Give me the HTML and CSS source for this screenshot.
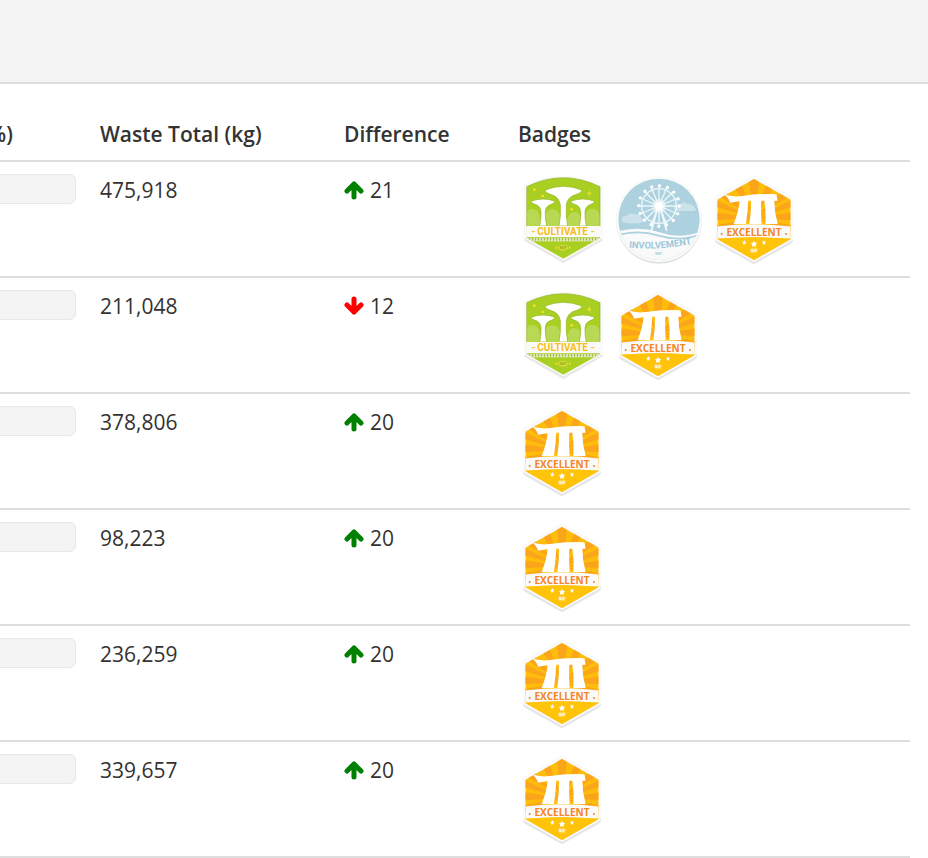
FILE: index.html
```
<!DOCTYPE html>
<html lang="en">
<head>
<meta charset="utf-8">
<title>Waste totals</title>
<link rel="stylesheet" href="styles.css">
</head>
<body>
<svg class="sprite" aria-hidden="true">
  <defs>
    <clipPath id="shield"><path d="M35 56Q145 2 255 56V210L145 272L35 210Z"/></clipPath>
    <clipPath id="disc"><circle cx="144" cy="154" r="122"/></clipPath>
    <clipPath id="hex"><path d="M141 33L251 95V213L141 276L31 213V95Z"/></clipPath>
    <path id="wave" d="M44 238Q95 243 145 241Q200 236 252 226"/>

    <symbol id="arrow" viewBox="0 0 20 20">
      <path d="M10 17V4M3 11L10 4L17 11" fill="none" stroke="currentColor" stroke-width="5" stroke-linecap="round" stroke-linejoin="round"/>
    </symbol>

    <symbol id="cultivate" viewBox="9 18 288 270">
      <path d="M28 57Q28 51 34 49Q145 2 256 49Q262 51 262 57V218L145 286L28 218Z" fill="#e9e9e9"/>
      <path d="M28 56Q28 49 34 47Q145 -2 256 47Q262 49 262 56V210L145 277L28 210Z" fill="#fbfbfb"/>
      <g clip-path="url(#shield)">
        <path d="M30 20H260V280H30Z" fill="#a9cf22"/>
        <g fill="#b9d955">
          <circle cx="52" cy="144" r="21"/><circle cx="112" cy="148" r="24"/><circle cx="178" cy="150" r="18"/><circle cx="232" cy="144" r="22"/>
          <path d="M35 150H255V174H35Z"/>
        </g>
        <g fill="#fff" stroke="#8fb51c" stroke-width="2">
          <path d="M48 100Q84 86 120 100Q119 106 109 109Q91 114 91 132Q90 152 95 174H74Q79 152 78 132Q77 114 60 109Q49 106 48 100Z"/>
          <path d="M167 100Q203 86 239 100Q238 106 228 109Q211 114 210 132Q209 152 214 174H193Q198 152 197 132Q196 114 179 109Q168 106 167 100Z"/>
          <path d="M90 66Q145 44 201 66Q199 75 185 79Q157 86 154 111Q152 143 158 174H132Q138 143 136 111Q133 86 106 79Q91 75 90 66Z"/>
        </g>
        <g fill="#ffdf22">
          <path d="M223 66L225 74L232 76L225 78L223 86L221 78L214 76L221 74Z"/>
          <circle cx="58" cy="65" r="4"/><circle cx="83" cy="84" r="4"/><circle cx="170" cy="124" r="4"/>
        </g>
        <path d="M30 174H260V207H30Z" fill="#fafafa"/>
        <path d="M36 209H254V220H36Z" fill="#f5f8e9"/>
        <path d="M41 214H250" stroke="#a4bc45" stroke-width="8" stroke-dasharray="5 4"/>
        <ellipse cx="144" cy="239" rx="15" ry="9" fill="#d3db31"/>
        <circle cx="124" cy="239" r="3" fill="#ffdf22"/><circle cx="164" cy="239" r="3" fill="#ffdf22"/>
      </g>
      <path d="M35 174V56Q145 2 255 56V174" fill="none" stroke="#91ae28" stroke-width="2"/>
      <text x="144" y="243" class="mark" fill="#91a926">NUP</text>
      <text x="143" y="201" class="name cultivate" fill="#f8bd17">CULTIVATE</text>
      <path d="M50 191H60M228 191H238" stroke="#f8bd17" stroke-width="3"/>
    </symbol>

    <symbol id="involvement" viewBox="9 18 288 270">
      <circle cx="144" cy="158" r="129" fill="#dedede"/>
      <circle cx="144" cy="154" r="129" fill="#f9fafa"/>
      <g clip-path="url(#disc)">
        <path d="M20 30H270V280H20Z" fill="#add1df"/>
        <path d="M34 158Q27 144 47 143Q55 132 70 139Q88 136 91 150Q101 153 94 163Q75 170 34 163ZM189 119Q192 107 206 109Q217 99 229 108Q246 106 251 119Q260 124 249 129H202Q188 128 189 119Z" fill="#cce2eb"/>
        <g stroke="#edf8fa" stroke-width="4" fill="none">
          <circle cx="144" cy="114" r="52"/>
          <path d="M144 52V176M82 114H206M100 70L188 158M100 158L188 70M120 57L168 171M87 90L201 138M87 138L201 90M120 171L168 57"/>
          <path d="M141 114L121 188M147 114L167 188" stroke-width="6"/>
        </g>
        <circle cx="144" cy="114" r="61" fill="none" stroke="#fff" stroke-width="10" stroke-linecap="round" stroke-dasharray="0 23.950"/>
        <circle cx="144" cy="114" r="13" fill="#fff"/><circle cx="144" cy="114" r="21" fill="#fff" opacity=".35"/>
        <path d="M20 190Q83 173 143 192Q207 215 270 190V282H20Z" fill="#fafafa"/>
        <path d="M20 201Q83 184 143 203Q207 222 270 199" stroke="#abd2df" stroke-width="5" fill="none"/>
        <ellipse cx="143" cy="258" rx="14" ry="10" fill="#fff" stroke="#e5eef1" stroke-width="2"/>
      </g>
      <text x="143" y="262" class="mark" fill="#9ec5d3">NUP</text>
      <text class="name involvement" fill="#9cc8da"><textPath href="#wave" startOffset="50%">INVOLVEMENT</textPath></text>
    </symbol>

    <symbol id="excellent" viewBox="9 18 288 270">
      <path d="M133 32Q141 27 149 32L252 90Q258 93 258 100V217Q258 223 252 227L141 289L30 227Q24 223 24 217V100Q24 93 30 90Z" fill="#e6e6e6"/>
      <path d="M133 25Q141 20 149 25L252 83Q258 86 258 93V209Q258 216 252 219L141 282L30 219Q24 216 24 209V93Q24 86 30 83Z" fill="#fafafa"/>
      <g clip-path="url(#hex)">
        <path d="M25 25H256V285H25Z" fill="#ffbd0b"/>
        <path d="M141 150L123 20H159ZM141 150L64 30L91 15ZM141 150L20 75L33 48ZM141 150L20 115V92ZM141 150L20 157V132ZM141 150L191 15L218 30ZM141 150L249 48L262 75ZM141 150L262 92V115ZM141 150L262 132V157ZM141 150L20 194V174ZM141 150L262 174V194Z" fill="#fba51b"/>
        <path d="M52 79Q75 88 105 84Q158 76 208 79L212 98H202Q202 132 212 168H175Q178 132 172 98H163Q161 132 164 168H127Q133 132 132 98H124Q122 132 117 168H80Q95 130 98 99L70 104Q65 90 52 79Z" fill="#fff"/>
        <path d="M25 176Q141 162 257 176V213Q141 203 25 213Z" fill="#fafafa"/>
        <path d="M25 213Q141 203 257 213V285H25Z" fill="#ffc30a"/>
        <g fill="#fff">
          <path d="M141 218L144 224L151 225L146 230L147 237L141 234L135 237L136 230L131 225L138 224Z"/>
          <path d="M112 216L114 221L119 221L115 225L116 230L112 228L108 230L109 225L105 221L110 221Z"/>
          <path d="M171 216L173 221L178 221L174 225L175 230L171 228L167 230L168 225L164 221L169 221Z"/>
        </g>
        <path d="M131 240H152V256H131Z" fill="#ffd040"/>
      </g>
      <text x="141" y="252" class="mark" fill="#fff">NUP</text>
      <text x="141" y="204" class="name excellent" fill="#f58426">EXCELLENT</text>
      <circle cx="44" cy="198" r="3" fill="#f58426"/><circle cx="237" cy="198" r="3" fill="#f58426"/>
    </symbol>
  </defs>
</svg>

<header class="topbar"></header>
<main class="report">
  <table class="totals">
    <colgroup><col class="col-rate"><col class="col-total"><col class="col-diff"><col></colgroup>
    <thead>
      <tr><th scope="col">%)</th><th scope="col">Waste Total (kg)</th><th scope="col">Difference</th><th scope="col">Badges</th></tr>
    </thead>
    <tbody>
      <tr>
        <td><div class="bar"></div></td><td>475,918</td>
        <td><span class="diff"><svg class="arrow up"><use href="#arrow"/></svg>21</span></td>
        <td><div class="badges"><svg><use href="#cultivate"/></svg><svg><use href="#involvement"/></svg><svg><use href="#excellent"/></svg></div></td>
      </tr>
      <tr>
        <td><div class="bar"></div></td><td>211,048</td>
        <td><span class="diff"><svg class="arrow down"><use href="#arrow"/></svg>12</span></td>
        <td><div class="badges"><svg><use href="#cultivate"/></svg><svg><use href="#excellent"/></svg></div></td>
      </tr>
      <tr>
        <td><div class="bar"></div></td><td>378,806</td>
        <td><span class="diff"><svg class="arrow up"><use href="#arrow"/></svg>20</span></td>
        <td><div class="badges"><svg><use href="#excellent"/></svg></div></td>
      </tr>
      <tr>
        <td><div class="bar"></div></td><td>98,223</td>
        <td><span class="diff"><svg class="arrow up"><use href="#arrow"/></svg>20</span></td>
        <td><div class="badges"><svg><use href="#excellent"/></svg></div></td>
      </tr>
      <tr>
        <td><div class="bar"></div></td><td>236,259</td>
        <td><span class="diff"><svg class="arrow up"><use href="#arrow"/></svg>20</span></td>
        <td><div class="badges"><svg><use href="#excellent"/></svg></div></td>
      </tr>
      <tr>
        <td><div class="bar"></div></td><td>339,657</td>
        <td><span class="diff"><svg class="arrow up"><use href="#arrow"/></svg>20</span></td>
        <td><div class="badges"><svg><use href="#excellent"/></svg></div></td>
      </tr>
    </tbody>
  </table>
</main>
</body>
</html>
```
FILE: styles.css
```
* { box-sizing: border-box; }

body {
  margin: 0;
  background: #fff;
  color: #333;
  font: 21px/32px "Open Sans", sans-serif;
  overflow-x: hidden;
}

.sprite { position: absolute; width: 0; height: 0; }

.topbar {
  height: 84px;
  background: #f4f4f4;
  border-bottom: 2px solid #ddd;
}

.report { padding: 22px 18px 0 0; }

/* The first column runs past the left edge of the window. */
.totals {
  width: calc(100% + 24px);
  margin-left: -24px;
  table-layout: fixed;
  border-collapse: separate;
  border-spacing: 0;
}

.col-rate { width: 112px; }
.col-total { width: 244px; }
.col-diff { width: 174px; }

th, td {
  padding: 12px;
  border-bottom: 2px solid #ddd;
  text-align: left;
  vertical-align: top;
  white-space: nowrap;
}

th {
  padding-bottom: 10px;
  font-weight: 600;
}

.bar {
  height: 30px;
  background: #f4f4f4;
  border: 1px solid #e8e8e8;
  border-radius: 6px;
}

.diff { display: flex; align-items: center; gap: 6px; }
.arrow { width: 20px; height: 20px; }
.up { color: #008000; }
.down { color: #f00; transform: rotate(180deg); }

.badges { display: flex; }
.badges svg { width: 96px; height: 90px; }

.name { font-weight: 700; text-anchor: middle; }
.cultivate { font-family: Roboto, sans-serif; font-size: 30px; }
.involvement { font-family: Roboto, sans-serif; font-size: 28px; }
.excellent { font-family: "Open Sans", sans-serif; font-size: 30px; }
.mark { font-family: Roboto, sans-serif; font-size: 10px; font-weight: 700; text-anchor: middle; }
```
